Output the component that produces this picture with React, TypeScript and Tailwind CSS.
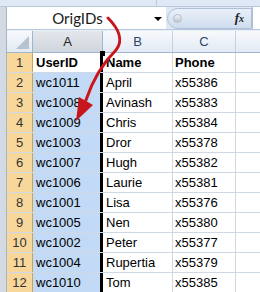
import React from "react";

type Row = { n: number; id: string; name: string; phone: string };

const rows: Row[] = [
  { n: 2, id: "wc1011", name: "April", phone: "x55386" },
  { n: 3, id: "wc1008", name: "Avinash", phone: "x55383" },
  { n: 4, id: "wc1009", name: "Chris", phone: "x55384" },
  { n: 5, id: "wc1003", name: "Dror", phone: "x55378" },
  { n: 6, id: "wc1007", name: "Hugh", phone: "x55382" },
  { n: 7, id: "wc1006", name: "Laurie", phone: "x55381" },
  { n: 8, id: "wc1001", name: "Lisa", phone: "x55376" },
  { n: 9, id: "wc1005", name: "Nen", phone: "x55380" },
  { n: 10, id: "wc1002", name: "Peter", phone: "x55377" },
  { n: 11, id: "wc1004", name: "Rupertia", phone: "x55379" },
  { n: 12, id: "wc1010", name: "Tom", phone: "x55385" },
];

const SheetRow: React.FC<{
  n: number;
  a: string;
  b: string;
  c: string;
  bold?: boolean;
  active?: boolean;
}> = ({ n, a, b, c, bold, active }) => (
  <div className={`flex h-[20px] border-b border-[#d0d7e5] ${bold ? "font-bold" : ""}`}>
    <div className="w-[26px] shrink-0 flex items-center justify-center bg-[#f8d79b] border-r border-[#c9a35a] text-[#333] font-normal">
      {n}
    </div>
    <div
      className={`w-[70px] shrink-0 flex items-center pl-[3px] border-r-[3px] border-black ${
        active ? "bg-white" : "bg-[#c2daf5]"
      }`}
    >
      {a}
    </div>
    <div className="w-[70px] shrink-0 flex items-center pl-[3px] border-r border-[#d0d7e5]">{b}</div>
    <div className="w-[63px] shrink-0 flex items-center pl-[2px] border-r border-[#d0d7e5]">{c}</div>
    <div className="flex-1" />
  </div>
);

export default function App() {
  return (
    <div className="relative w-[260px] h-[292px] overflow-hidden bg-white font-['Liberation_Sans',Arial,sans-serif] text-[13px] text-black">
      {/* ribbon edge */}
      <div className="h-[7px] flex bg-[#dfe9f5] border-b border-[#b9c9dd]">
        <div className="w-[157px] border-r border-[#b9c9dd]" />
      </div>

      <div className="flex">
        {/* left window edge */}
        <div className="w-[7px] shrink-0 bg-[#d3dae3] border-r border-[#a7b4c4]" />

        <div className="flex-1 flex flex-col">
          {/* formula bar */}
          <div className="h-[23px] flex bg-[#dfe9f5] border-b border-[#b9c9dd]">
            <div className="w-[159px] shrink-0 bg-white flex items-center relative">
              <span className="flex-1 text-center text-[15px] text-[#1a1a1a] pr-[18px] font-['Lato',sans-serif]">
                OrigIDs
              </span>
              <span className="absolute right-[4px] top-[10px] w-0 h-0 border-l-[4px] border-r-[4px] border-t-[4px] border-l-transparent border-r-transparent border-t-black" />
            </div>
            <div className="flex-1 flex items-center">
              <div className="w-[85px] h-[21px] ml-[1px] rounded-l-full bg-gradient-to-b from-[#e9f0f9] to-[#cfdcee] border border-[#aebfd5] flex items-center">
                <span className="ml-[5px] w-[9px] h-[9px] rounded-full bg-gradient-to-b from-[#f2f4f7] to-[#bcc4ce] border border-[#b4bdc9]" />
                <span className="ml-auto mr-[7px] font-['Liberation_Serif',serif] italic font-bold text-[13px] text-[#222]">
                  f<span className="text-[10px]">x</span>
                </span>
              </div>
              <div className="flex-1 h-full bg-white border-l border-[#aebfd5]" />
            </div>
          </div>

          <div className="h-[1px] bg-[#e8eef6]" />

          {/* column headers */}
          <div className="flex h-[22px] border-b border-[#9eb6ce] bg-gradient-to-b from-[#f7f9fc] to-[#e3eaf4] text-[#2a4767]">
            <div className="w-[26px] shrink-0 border-r border-[#9eb6ce] flex items-end justify-end p-[3px]">
              <svg width="13" height="13" viewBox="0 0 13 13">
                <polygon points="13,0 13,13 0,13" fill="#b8c3d0" />
              </svg>
            </div>
            <div className="w-[70px] shrink-0 flex items-center justify-center bg-gradient-to-b from-[#e4e8ed] to-[#cfd5dc] border-r border-[#9eb6ce] text-[#222]">
              A
            </div>
            <div className="w-[70px] shrink-0 flex items-center justify-center border-r border-[#c5d1df]">B</div>
            <div className="w-[63px] shrink-0 flex items-center justify-center border-r border-[#c5d1df]">C</div>
            <div className="flex-1" />
          </div>

          <SheetRow n={1} a="UserID" b="Name" c="Phone" bold active />
          {rows.map((r) => (
            <SheetRow key={r.n} n={r.n} a={r.id} b={r.name} c={r.phone} />
          ))}
        </div>
      </div>

      {/* fill handle */}
      <div className="absolute left-[100px] top-[51px] w-[5px] h-[5px] bg-black" />

      {/* red annotation arrow */}
      <svg className="absolute left-0 top-0" width="260" height="292" viewBox="0 0 260 292">
        <path
          d="M108 18 C118 28 124 40 116 50 C106 60 94 76 86 100"
          fill="none"
          stroke="#c8161d"
          strokeWidth="3"
          strokeLinecap="round"
        />
        <polygon points="76,121 79,97 93,105" fill="#c8161d" />
      </svg>
    </div>
  );
}
